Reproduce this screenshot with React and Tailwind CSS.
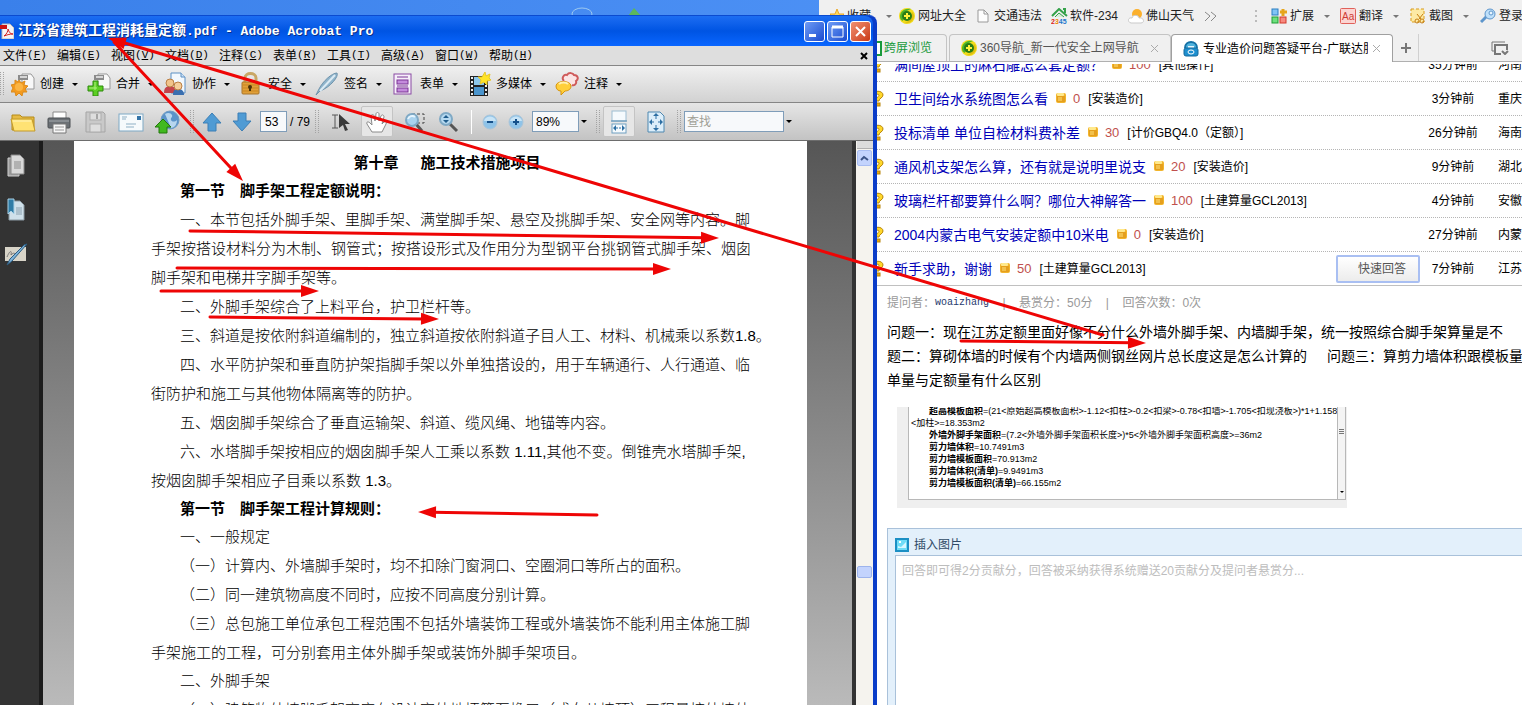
import React from 'react'

const menus = [
  ['文件', 'F'],
  ['编辑', 'E'],
  ['视图', 'V'],
  ['文档', 'D'],
  ['注释', 'C'],
  ['表单', 'R'],
  ['工具', 'T'],
  ['高级', 'A'],
  ['窗口', 'W'],
  ['帮助', 'H'],
]

const docLines = [
  { head: true, text: '第一节　脚手架工程定额说明：' },
  { indent: true, text: '一、本节包括外脚手架、里脚手架、满堂脚手架、悬空及挑脚手架、安全网等内容。脚' },
  { text: '手架按搭设材料分为木制、钢管式；按搭设形式及作用分为型钢平台挑钢管式脚手架、烟囱' },
  { text: '脚手架和电梯井字脚手架等。' },
  { indent: true, text: '二、外脚手架综合了上料平台，护卫栏杆等。' },
  { indent: true, text: '三、斜道是按依附斜道编制的，独立斜道按依附斜道子目人工、材料、机械乘以系数1.8。' },
  { indent: true, text: '四、水平防护架和垂直防护架指脚手架以外单独搭设的，用于车辆通行、人行通道、临' },
  { text: '街防护和施工与其他物体隔离等的防护。' },
  { indent: true, text: '五、烟囱脚手架综合了垂直运输架、斜道、缆风绳、地锚等内容。' },
  { indent: true, text: '六、水塔脚手架按相应的烟囱脚手架人工乘以系数 1.11,其他不变。倒锥壳水塔脚手架,' },
  { text: '按烟囱脚手架相应子目乘以系数 1.3。' },
  { head: true, text: '第一节　脚手架工程计算规则：' },
  { indent: true, sub: true, text: '一、一般规定' },
  { indent: true, text: '（一）计算内、外墙脚手架时，均不扣除门窗洞口、空圈洞口等所占的面积。' },
  { indent: true, text: '（二）同一建筑物高度不同时，应按不同高度分别计算。' },
  { indent: true, text: '（三）总包施工单位承包工程范围不包括外墙装饰工程或外墙装饰不能利用主体施工脚' },
  { text: '手架施工的工程，可分别套用主体外脚手架或装饰外脚手架项目。' },
  { indent: true, sub: true, text: '二、外脚手架' },
  { indent: true, text: '（一）建筑物外墙脚手架高度在设计室外地坪算至檐口（或女儿墙顶）工程量按外墙外' },
]

const questions = [
  { title: '满间屋顶上的麻石雕怎么套定额？', score: 100, tag: '[其他操作]', time: '35分钟前', area: '河南' },
  { title: '卫生间给水系统图怎么看', score: 0, tag: '[安装造价]', time: '3分钟前', area: '重庆' },
  { title: '投标清单 单位自检材料费补差', score: 30, tag: '[计价GBQ4.0（定额）]', time: '26分钟前', area: '海南' },
  { title: '通风机支架怎么算，还有就是说明里说支', score: 20, tag: '[安装造价]', time: '9分钟前', area: '湖北' },
  { title: '玻璃栏杆都要算什么啊？哪位大神解答一', score: 100, tag: '[土建算量GCL2013]', time: '4分钟前', area: '安徽' },
  { title: '2004内蒙古电气安装定额中10米电', score: 0, tag: '[安装造价]', time: '27分钟前', area: '内蒙' },
  { title: '新手求助，谢谢', score: 50, tag: '[土建算量GCL2013]', time: '7分钟前', area: '江苏', quick: true },
]

const arrows = [
  [1103, 335, 108, 38],
  [114, 42, 243, 181],
  [190, 231, 719, 238],
  [177, 268, 671, 269],
  [161, 291, 319, 291],
  [210, 317, 439, 319],
  [961, 341, 1146, 343],
  [597, 515, 418, 512],
]

/* ---------- small shared parts ---------- */

function Caret({ className = 'border-t-black' }) {
  return <span className={`border-x-3 border-t-3 border-x-transparent ${className}`} />
}

function Grip() {
  return (
    <svg width="4" height="24" className="shrink-0">
      {Array.from({ length: 12 }, (_, i) => (
        <g key={i} fill="#a3a3a3">
          <rect x="0" y={i * 2} width="1" height="1" />
          <rect x="3" y={i * 2} width="1" height="1" />
        </g>
      ))}
    </svg>
  )
}

function Icon({ w = 24, h = 24, children }) {
  return (
    <svg width={w} height={h} viewBox={`0 0 ${w} ${h}`} className="shrink-0">
      {children}
    </svg>
  )
}

/* ---------- acrobat icons ---------- */

function PdfIcon() {
  return (
    <Icon w={14} h={16}>
      <path d="M2 1h8l4 4v11H2z" fill="#f4f4f4" stroke="#b9b9b9" />
      <path d="M0 2h7v4H0z" fill="#c11" />
      <path d="M4 13c3-2 4-5 4-7 1 3 2 5 5 5-4 0-6 1-9 2z" fill="none" stroke="#d21f1f" />
    </Icon>
  )
}

function PrinterPaper() {
  return (
    <>
      <path d="M11 2h9l3 4v11H11z" fill="#f8f8f8" stroke="#999" />
      <path d="M7 3h10v5H7z" fill="#8b8b8b" />
      <path d="M9 4h7v2H9z" fill="#d6d6d6" />
    </>
  )
}

function CreateIcon() {
  return (
    <Icon>
      <PrinterPaper />
      <path d="M8 8l2 3 4-2-1 4 4 1-3 3 2 3-4 0-1 4-3-3-3 3-1-4-4 0 2-4-2-3 4-1 0-4 3 2z" fill="#f39a1f" stroke="#d98a1c" />
      <circle cx="8" cy="15" r="4" fill="#fbb544" />
    </Icon>
  )
}

function MergeIcon() {
  return (
    <Icon>
      <PrinterPaper />
      <path d="M6 9h5v5h5v5h-5v5H6v-5H1v-5h5z" fill="#5ccf23" stroke="#2c8a0c" />
      <path d="M8 10v8M2 16h8" stroke="#b0f080" strokeWidth="1" />
    </Icon>
  )
}

function CollabIcon() {
  return (
    <Icon>
      <path d="M8 1h10l4 4v16H8z" fill="#f3f8fd" stroke="#5d90c4" />
      <path d="M18 1v4h4" fill="#cfe2f5" stroke="#5d90c4" />
      <path d="M1 21c0-5 2-7 6-7s6 2 6 7z" fill="#c5434b" />
      <circle cx="7" cy="11" r="4" fill="#f1c48b" stroke="#ba7e43" />
      <path d="M10 23c0-5 2-6 5-6s6 1 6 6z" fill="#3a6fb0" />
      <circle cx="15" cy="14" r="4" fill="#f5ce9b" stroke="#ba7e43" />
    </Icon>
  )
}

function LockIcon() {
  return (
    <Icon>
      <path d="M6 11V6c0-6 11-6 11 0v5" fill="none" stroke="#c9a765" strokeWidth="3" />
      <rect x="3" y="10" width="17" height="12" rx="1" fill="#e0a039" stroke="#a8752a" />
      <path d="M4 13h15M4 16h15M4 19h15" stroke="#c98520" />
      <circle cx="11" cy="15" r="2" fill="#4c3209" />
      <path d="M11 15v4" stroke="#4c3209" strokeWidth="2" />
    </Icon>
  )
}

function PenIcon() {
  return (
    <Icon>
      <path d="M22 1c2 3-6 14-17 18L1 23l3-6C8 9 17 1 22 1z" fill="#8fb4cb" stroke="#6f93ab" />
      <path d="M20 3L5 19" stroke="#dcebf4" strokeWidth="2" />
    </Icon>
  )
}

function FormIcon() {
  return (
    <Icon>
      <rect x="3" y="2" width="17" height="20" fill="#f6effa" stroke="#8a4ba3" strokeWidth="1" />
      <path d="M6 5h11M6 14h11" stroke="#7a3594" />
      <rect x="6" y="8" width="11" height="4" fill="#c48bdc" stroke="#7a3594" />
      <rect x="6" y="16" width="11" height="4" fill="#c48bdc" stroke="#7a3594" />
    </Icon>
  )
}

function MediaIcon() {
  return (
    <Icon>
      <rect x="3" y="4" width="18" height="20" fill="#222" />
      <rect x="7" y="5" width="10" height="8" fill="#8cc6ea" />
      <rect x="7" y="15" width="10" height="8" fill="#4b95cd" />
      <path d="M5 5v18M19 5v18" stroke="#eee" strokeWidth="2" strokeDasharray="2 2" />
      <path d="M18 0l1 4 4-2-1 4 2 2-4 1 0 4-3-3-4 2 1-4-3-3 4 0z" fill="#ffe427" stroke="#e6c62a" />
    </Icon>
  )
}

function CommentIcon() {
  return (
    <Icon>
      <path d="M9 9c-3-3 0-7 3-6 2-3 6-2 7 0 4 0 5 4 2 6 1 3-2 5-4 4" fill="#fbe5e5" stroke="#cf5b5b" strokeWidth="2" />
      <path d="M1 14c0-6 15-6 15 0 0 4-4 5-6 5l-4 4v-4c-3 0-5-2-5-5z" fill="#ffcf3a" stroke="#d59410" />
      <path d="M4 12c2-2 7-2 9 0" fill="none" stroke="#fff0b0" strokeWidth="2" />
    </Icon>
  )
}

const tasks = [
  { label: '创建', icon: <CreateIcon /> },
  { label: '合并', icon: <MergeIcon /> },
  { label: '协作', icon: <CollabIcon /> },
  { label: '安全', icon: <LockIcon /> },
  { label: '签名', icon: <PenIcon /> },
  { label: '表单', icon: <FormIcon /> },
  { label: '多媒体', icon: <MediaIcon /> },
  { label: '注释', icon: <CommentIcon /> },
]

function FolderIcon() {
  return (
    <Icon w={26}>
      <path d="M2 20V5h8l2 2h12v13z" fill="#e6bb45" stroke="#b58a17" />
      <path d="M1 9h21l3 12H4z" fill="#ffe273" stroke="#c39a2a" />
      <path d="M3 11h18" stroke="#fff4bd" />
    </Icon>
  )
}

function PrintIcon() {
  return (
    <Icon w={26}>
      <path d="M7 2h13v8H7z" fill="#fff" stroke="#8a8a8a" />
      <rect x="2" y="8" width="22" height="10" rx="1" fill="#6b7075" stroke="#4c5054" />
      <path d="M3 11h20" stroke="#a6abb0" />
      <path d="M7 14h13v9H7z" fill="#f7f7f7" stroke="#777" />
      <path d="M9 17h9M9 20h9" stroke="#999" />
    </Icon>
  )
}

function SaveIcon() {
  return (
    <Icon w={26}>
      <path d="M4 2h17l2 2v18H4z" fill="#c9c9c9" stroke="#a5a5a5" />
      <rect x="8" y="3" width="11" height="7" fill="#dedede" stroke="#adadad" />
      <path d="M15 4v5" stroke="#a5a5a5" strokeWidth="2" />
      <rect x="8" y="14" width="11" height="8" fill="#dedede" stroke="#adadad" />
    </Icon>
  )
}

function MailIcon() {
  return (
    <Icon w={26}>
      <rect x="1" y="4" width="24" height="17" fill="#f6fafc" stroke="#7fa9c5" />
      <rect x="19" y="6" width="4" height="4" fill="#3374a8" />
      <path d="M4 7h5M4 9h4M8 14h10M8 17h8" stroke="#8fb0c5" />
    </Icon>
  )
}

function UploadIcon() {
  return (
    <Icon w={26}>
      <circle cx="16" cy="10" r="9" fill="#5b93c9" stroke="#6f9cc4" />
      <path d="M11 4c3-2 6-1 7 1s-2 3-1 5 4 2 6 0c0 5-3 8-6 8" fill="#b7d6ee" />
      <path d="M9 9l8 8h-4v6H5v-6H1z" fill="#41b91f" stroke="#23780c" />
    </Icon>
  )
}

function BlueArrow({ down }) {
  return (
    <Icon w={20}>
      <path
        d={down ? 'M6 3h8v8h5l-9 10L1 11h5z' : 'M10 3l9 10h-5v8H6v-8H1z'}
        fill="#4f9bd4"
        stroke="#3d7fb5"
      />
    </Icon>
  )
}

function SelectTool() {
  return (
    <Icon w={20}>
      <path d="M1 5h6M4 5v13M1 18h6" stroke="#555" strokeWidth="1" />
      <path d="M8 4l11 10h-5l3 6-3 1-2-6-4 3z" fill="#3b3b3b" />
    </Icon>
  )
}

function HandIcon() {
  return (
    <Icon>
      <path
        d="M7 22l-5-8c-1-2 1-3 3-1l2 2-1-9c0-2 3-2 3 0l1 5 1-7c0-2 3-2 3 0v7l2-5c1-2 3-1 3 1l-2 7 2-2c2-1 3 0 2 2l-4 8z"
        fill="#fff"
        stroke="#8a8a8a"
      />
    </Icon>
  )
}

function MarqueeZoom() {
  return (
    <Icon>
      <path d="M9 4h12v9H11" fill="none" stroke="#444" strokeDasharray="3 2" />
      <path d="M13 14l6 7" stroke="#555" strokeWidth="3" />
      <circle cx="9" cy="10" r="6" fill="#a9d2ee" stroke="#7fa9c5" strokeWidth="2" />
      <path d="M5 9c1-3 5-4 7-2" stroke="#e6f4fd" strokeWidth="2" fill="none" />
    </Icon>
  )
}

function DynamicZoom() {
  return (
    <Icon>
      <path d="M13 14l7 7" stroke="#555" strokeWidth="3" />
      <circle cx="9" cy="9" r="6" fill="#b6d9f0" stroke="#7fa9c5" strokeWidth="2" />
      <path d="M6 8l3-3 3 3zM6 10l3 3 3-3z" fill="#1f5c8c" />
    </Icon>
  )
}

function ZoomDot({ plus }) {
  return (
    <Icon w={16} h={16}>
      <circle cx="8" cy="8" r="7" fill="#8fc3e8" stroke="#a9c4d8" />
      <path d="M2 7c1-6 11-6 12 0z" fill="#c8e4f6" />
      <path d={plus ? 'M5 8h6M8 5v6' : 'M5 8h6'} stroke="#15508a" strokeWidth="2" />
    </Icon>
  )
}

function FitWidthIcon() {
  return (
    <Icon w={18}>
      <rect x="2" y="1" width="14" height="10" fill="#f5fafd" stroke="#9dbdd2" />
      <path d="M1 11h16" stroke="#4f88b0" />
      <rect x="2" y="14" width="14" height="9" fill="#f5fafd" stroke="#6f9fc0" />
      <path d="M6 15l-3 3 3 3zM12 15l3 3-3 3z" fill="#2d6fa3" />
      <path d="M6 18h6" stroke="#2d6fa3" strokeDasharray="2 1" />
    </Icon>
  )
}

function FitPageIcon() {
  return (
    <Icon w={18}>
      <path d="M1 2h12l4 4v16H1z" fill="#dceefa" stroke="#4f88b0" />
      <path d="M9 3l3 3H6zM9 21l3-3H6zM2 12l3-3v6zM16 12l-3-3v6z" fill="#2d6fa3" />
      <path d="M9 6v3M9 15v3M5 12h2M11 12h2" stroke="#2d6fa3" />
    </Icon>
  )
}

function PagesIcon() {
  return (
    <Icon w={20}>
      <path d="M2 4h11v18H2z" fill="#9c9c9c" stroke="#d0d0d0" />
      <path d="M5 1h9l4 4v15H5z" fill="#d9d9d9" stroke="#8a8a8a" />
      <path d="M8 8h7M8 10h7M8 12h7M8 14h7" stroke="#8b8b8b" />
    </Icon>
  )
}

function BookmarkIcon() {
  return (
    <Icon w={20}>
      <path d="M3 3h11l4 4v15H3z" fill="#cfe0ea" stroke="#8b9aa3" />
      <path d="M10 10h6M10 12h6M10 14h6M10 16h6" stroke="#8aa0ae" />
      <path d="M2 1h6v15l-3-3-3 3z" fill="#2f7ca6" stroke="#a9d1e6" />
    </Icon>
  )
}

function SignIcon() {
  return (
    <Icon>
      <rect x="1" y="5" width="21" height="14" fill="#d8d4c8" />
      <path d="M3 15c3-7 5-7 4-2 3-3 4-2 5 1" fill="none" stroke="#777" />
      <path d="M23 2L8 19l-5 4 3-6L20 3z" fill="#7fb4da" stroke="#2c5d83" />
    </Icon>
  )
}

/* ---------- acrobat window ---------- */

function TitleBar() {
  const btn = 'w-[21px] h-[21px] rounded-[3px] border border-white flex items-center justify-center'
  return (
    <header className="h-[30px] shrink-0 pl-1 pr-[2px] flex items-center justify-between rounded-tr-lg bg-linear-to-b from-[#1c6df2] via-[#0054e3] to-[#0a66ff]">
      <h1 className="flex items-center gap-1 min-w-0 text-sm font-bold text-white whitespace-nowrap [text-shadow:1px_1px_#0a2f86]">
        <span className="-ml-1 flex"><PdfIcon /></span>
        <span className="font-['Liberation_Mono','Noto_Sans_CJK_SC',monospace]">
          江苏省建筑工程消耗量定额<span className="text-[13px]">.pdf - Adobe Acrobat Pro</span>
        </span>
      </h1>
      <div className="flex gap-[2px]">
        <button aria-label="最小化" className={`${btn} bg-linear-to-br from-[#6f9bf5] to-[#1c49cf]`}>
          <Icon w={13} h={13}><rect x="1" y="9" width="7" height="3" fill="#fff" /></Icon>
        </button>
        <button aria-label="最大化" className={`${btn} bg-linear-to-br from-[#6f9bf5] to-[#1c49cf]`}>
          <Icon w={13} h={13}><path d="M1 2h11v10H1z" fill="none" stroke="#fff" /><path d="M1 2h11" stroke="#fff" strokeWidth="3" /></Icon>
        </button>
        <button aria-label="关闭" className={`${btn} bg-linear-to-br from-[#f0906f] to-[#c9360f]`}>
          <Icon w={13} h={13}><path d="M2 2l9 9M11 2l-9 9" stroke="#fff" strokeWidth="2" /></Icon>
        </button>
      </div>
    </header>
  )
}

function MenuBar() {
  return (
    <nav className="h-5 shrink-0 pl-[3px] pr-1 flex items-center bg-[#dedede] border-b border-[#868686]">
      {menus.map(([name, key]) => (
        <button key={key} className="w-[54px] flex items-center whitespace-nowrap">
          {name}
          <span className="font-['Liberation_Mono',monospace] text-[11px]">(<u>{key}</u>)</span>
        </button>
      ))}
      <button aria-label="关闭文档" className="ml-auto">
        <Icon w={10} h={8}><path d="M2 1l6 6M8 1L2 7" stroke="#000" strokeWidth="2" /></Icon>
      </button>
    </nav>
  )
}

function TaskBar() {
  return (
    <div className="h-[37px] shrink-0 pl-1 flex items-center bg-linear-to-b from-[#f0f0f0] to-[#d2d2d2] border-b border-[#868686]">
      <div className="w-2 -ml-1"><Grip /></div>
      <div className="flex pl-[3px]">
        {tasks.map((t) => (
          <button key={t.label} className="flex items-center pr-[9px] whitespace-nowrap">
            {t.icon}
            <span className="pl-[5px] pr-2">{t.label}</span>
            <Caret />
          </button>
        ))}
      </div>
    </div>
  )
}

function ToolBar() {
  const field = 'h-[21px] border border-[#7f9db9] bg-[#f7f9fb] text-xs'
  const active = 'w-8 h-[31px] flex items-center justify-center bg-[#e6e6e6] border border-[#c4c4c4] rounded-xs'
  return (
    <div className="h-[38px] shrink-0 flex items-center bg-linear-to-b from-[#e6e6e6] to-[#c3c3c3] border-b border-[#6d6d6d] whitespace-nowrap">
      <div className="flex gap-[10px] pl-[10px] pr-[10px]">
        <button aria-label="打开"><FolderIcon /></button>
        <button aria-label="打印"><PrintIcon /></button>
        <button aria-label="保存"><SaveIcon /></button>
        <button aria-label="电子邮件"><MailIcon /></button>
        <button aria-label="上载"><UploadIcon /></button>
      </div>
      <Grip />
      <div className="flex items-center gap-[10px] pl-2">
        <button aria-label="上一页"><BlueArrow /></button>
        <button aria-label="下一页"><BlueArrow down /></button>
      </div>
      <input aria-label="页码" defaultValue="53" className={`${field} ml-2 w-[27px] pl-1`} />
      <span className="w-7 pl-[3px]">/ 79</span>
      <Grip />
      <div className="flex items-center gap-[10px] pl-3">
        <button aria-label="选择工具"><SelectTool /></button>
        <button aria-label="手形工具" className={active}><HandIcon /></button>
        <button aria-label="选框缩放"><MarqueeZoom /></button>
        <button aria-label="动态缩放"><DynamicZoom /></button>
        <span className="w-px h-6 bg-[#b0b0b0] border-r border-white" />
        <button aria-label="缩小"><ZoomDot /></button>
        <button aria-label="放大"><ZoomDot plus /></button>
      </div>
      <input aria-label="缩放比例" defaultValue="89%" className={`${field} ml-2 w-[47px] pl-[3px]`} />
      <button aria-label="缩放选项" className="w-[17px] pl-[2px] flex"><Caret /></button>
      <Grip />
      <div className="flex items-center gap-3 pl-[3px] pr-3">
        <button aria-label="适合宽度" className={active}><FitWidthIcon /></button>
        <button aria-label="适合页面"><FitPageIcon /></button>
      </div>
      <Grip />
      <input aria-label="查找" placeholder="查找" className={`${field} ml-[3px] w-[100px] pl-[2px] placeholder:text-[#a0a096]`} />
      <button aria-label="查找选项" className="w-3 pl-[2px] flex"><Caret /></button>
    </div>
  )
}

function DocPage() {
  return (
    <article className="flex-1 min-w-0 bg-white pl-[77px] pr-16 pt-[7px] text-[15px] text-black whitespace-nowrap">
      <h2 className="flex justify-center gap-[22px] leading-[29px] font-bold">
        <span>第十章</span>
        <span>施工技术措施项目</span>
      </h2>
      {docLines.map((l, i) => {
        if (l.head) return <h3 key={i} className="pl-[29px] leading-7 font-bold">{l.text}</h3>
        if (l.sub) return <h4 key={i} className="pl-[29px] leading-7 font-light">{l.text}</h4>
        return <p key={i} className={`leading-[29px] font-light ${l.indent ? 'pl-[29px]' : ''}`}>{l.text}</p>
      })}
    </article>
  )
}

function Acrobat() {
  return (
    <section className="z-10 mt-[15px] min-w-0 flex flex-col overflow-hidden rounded-tr-lg bg-[#0b3fc6] border-t border-r-4 border-t-[#0b4bd0] border-r-[#0a3cc8]">
      <TitleBar />
      <MenuBar />
      <TaskBar />
      <ToolBar />
      <div className="flex-1 min-h-0 flex overflow-hidden">
        <aside className="w-[43px] shrink-0 pl-1 pt-[13px] flex flex-col gap-5 bg-[#333333] border-r-4 border-[#1c1c1c]">
          <button aria-label="页面" className="w-6 pl-[2px]"><PagesIcon /></button>
          <button aria-label="书签" className="w-6 pl-[2px]"><BookmarkIcon /></button>
          <button aria-label="签名"><SignIcon /></button>
        </aside>
        <div className="flex-1 min-w-0 flex pl-[31px] pr-[45px] bg-linear-to-b from-[#565656] to-[#bababa]">
          <DocPage />
        </div>
        <div className="w-[21px] shrink-0 pl-[1px] border-l-4 border-[#333333] bg-[#f5f3ee]">
          <div className="h-2 bg-[#dcdcdc] border-b border-[#b0b0b0]" />
          <button aria-label="向上滚动" className="w-[15px] h-4 mt-[1px] flex items-center justify-center rounded-xs bg-[#c3d3fd] border border-[#a9bdf2]">
            <Icon w={9} h={7}><path d="M1 5l3-3 4 3" fill="none" stroke="#3b5387" strokeWidth="2" /></Icon>
          </button>
          <div className="mt-[400px] w-[15px] h-3 rounded-xs bg-[#c3d3fd] border border-[#9db3ec]" />
        </div>
      </div>
    </section>
  )
}

/* ---------- browser window ---------- */

function NavIcon() {
  return (
    <Icon w={16} h={16}>
      <circle cx="8" cy="8" r="8" fill="#f2dc1a" />
      <path d="M1 9c0-6 5-9 11-8C7 3 5 5 4 13 2 12 1 11 1 9z" fill="#4fb52a" />
      <path d="M15 8c0 5-5 8-10 7 5-1 7-4 8-11 1 1 2 2 2 4z" fill="#e0c010" />
      <circle cx="8" cy="8" r="5" fill="#2a7d14" />
      <path d="M5 8h6M8 5v6" stroke="#fff23a" strokeWidth="2" />
    </Icon>
  )
}

function StarIcon() {
  return (
    <Icon w={16} h={16}>
      <path d="M8 1l2 5h5l-4 4 2 5-5-3-5 3 2-5-4-4h5z" fill="#ffd95e" stroke="#eaa827" />
    </Icon>
  )
}

function PaperIcon() {
  return (
    <Icon w={12} h={14}>
      <path d="M1 1h6l4 4v8H1z" fill="#fdfdfd" stroke="#999" />
      <path d="M7 1v4h4" fill="none" stroke="#999" />
    </Icon>
  )
}

function HouseIcon() {
  return (
    <Icon w={17} h={16}>
      <path d="M1 8l7-7 8 7" fill="none" stroke="#35a24a" strokeWidth="2" />
      <path d="M4 9l4-4 5 4" fill="#d7efd9" stroke="#35a24a" />
      <path d="M12 1h2v4" fill="none" stroke="#35a24a" strokeWidth="2" />
      <text x="0" y="16" fontSize="7" fontWeight="bold" fontFamily="Liberation Sans">
        <tspan fill="#d22">2</tspan><tspan fill="#e80">3</tspan><tspan fill="#27c">45</tspan>
      </text>
    </Icon>
  )
}

function WeatherIcon() {
  return (
    <Icon w={16} h={16}>
      <circle cx="9" cy="6" r="5" fill="#fbb02d" />
      <path d="M3 15c-4-1-3-6 1-5 1-4 7-3 7 0 5-1 6 5 2 5z" fill="#fff" stroke="#c9c9c9" />
    </Icon>
  )
}

function GridIcon() {
  return (
    <Icon w={16} h={16}>
      <rect x="1" y="1" width="6" height="6" fill="#7fc4f5" stroke="#2b7fc2" />
      <path d="M12 1v7M9 4h7" stroke="#e6a51c" strokeWidth="3" />
      <rect x="1" y="9" width="6" height="6" fill="#6ee07e" stroke="#1f9d34" />
      <rect x="9" y="9" width="6" height="6" fill="#f78a80" stroke="#d2382b" />
    </Icon>
  )
}

function TranslateIcon() {
  return (
    <Icon w={16} h={16}>
      <rect x="0.5" y="0.5" width="15" height="15" rx="1" fill="#fbd5d2" stroke="#e0615a" />
      <text x="2" y="12" fontSize="10" fontFamily="Liberation Sans" fill="#cf3a34">Aa</text>
    </Icon>
  )
}

function SnipIcon() {
  return (
    <Icon w={16} h={16}>
      <rect x="1" y="1" width="13" height="13" fill="#fdeaa5" stroke="#d99b1b" strokeDasharray="3 2" />
      <path d="M7 6l4 5M13 6l-4 5" stroke="#c57d10" />
      <circle cx="7" cy="13" r="2" fill="none" stroke="#c57d10" />
      <circle cx="12" cy="13" r="2" fill="none" stroke="#c57d10" />
    </Icon>
  )
}

function KeyIcon() {
  return (
    <Icon w={16} h={16}>
      <path d="M7 8l-6 6" stroke="#5e96cc" strokeWidth="3" />
      <circle cx="10" cy="6" r="5" fill="#bfe0fa" stroke="#5e96cc" />
      <circle cx="11" cy="5" r="2" fill="#e8f5ff" stroke="#5e96cc" />
    </Icon>
  )
}

function SiteIcon() {
  return (
    <Icon w={16} h={16}>
      <path d="M2 7c0-8 12-8 12 0" fill="#4fb2dd" stroke="#1571a6" strokeWidth="2" />
      <rect x="5" y="5" width="6" height="2" fill="#e8f6fd" />
      <rect x="1" y="7" width="14" height="8" rx="2" fill="#1e8fcf" stroke="#12689b" />
      <ellipse cx="8" cy="11" rx="3" ry="2" fill="none" stroke="#fff" />
    </Icon>
  )
}

function AskIcon() {
  return (
    <Icon w={12} h={17}>
      <path d="M1 5c0-5 10-5 10 0 0 3-4 3-4 6H4c0-4 3-4 3-6 0-1-3-1-3 0z" fill="#ffd82b" stroke="#b78408" />
      <rect x="3" y="13" width="5" height="3" fill="#e9a90f" stroke="#b78408" />
    </Icon>
  )
}

function CoinIcon() {
  return (
    <Icon w={11} h={10}>
      <rect x="0" y="0" width="10" height="10" rx="2" fill="#f2b52c" />
      <rect x="1" y="0" width="7" height="3" rx="1" fill="#ffe98c" />
      <path d="M1 4h8M1 6h8M1 8h8" stroke="#d88a10" />
      <path d="M2 5h4M2 7h4" stroke="#ffe27a" />
    </Icon>
  )
}

function CloseX() {
  return (
    <Icon w={9} h={9}>
      <path d="M1 1l7 7M8 1L1 8" stroke="#aaa" />
    </Icon>
  )
}

function Favourites() {
  const grey = 'border-t-[#777]'
  return (
    <nav className="h-8 flex items-center justify-between pl-[10px] overflow-hidden text-[#222]">
      <div className="flex items-center">
        <a href="#" className="flex items-center gap-[2px] w-[57px]"><StarIcon />收藏</a>
        <span className="w-[11px] flex"><Caret className={grey} /></span>
        <a href="#" className="flex items-center gap-[3px] pl-[2px] w-[80px]"><NavIcon />网址大全</a>
        <a href="#" className="flex items-center gap-[5px] w-[74px]"><PaperIcon />交通违法</a>
        <a href="#" className="flex items-center gap-[2px] w-[77px]"><HouseIcon />软件-234</a>
        <a href="#" className="flex items-center gap-[2px] w-[76px]"><WeatherIcon />佛山天气</a>
        <button aria-label="更多收藏">
          <Icon w={13} h={11}><path d="M1 1l5 4-5 5M7 1l5 4-5 5" fill="none" stroke="#888" /></Icon>
        </button>
      </div>
      <div className="flex items-center">
        <Icon w={16} h={14}><path d="M1 1v2M1 6v2M1 11v2" stroke="#bbb" strokeWidth="2" /></Icon>
        <button className="flex items-center gap-[3px] w-[69px]"><GridIcon />扩展<span className="ml-[7px] flex"><Caret className={grey} /></span></button>
        <button className="flex items-center gap-[3px] w-[70px]"><TranslateIcon />翻译<span className="ml-[7px] flex"><Caret className={grey} /></span></button>
        <button className="flex items-center gap-[3px] w-[70px]"><SnipIcon />截图<span className="ml-[7px] flex"><Caret className={grey} /></span></button>
        <button className="flex items-center gap-[3px] w-[42px] whitespace-nowrap"><KeyIcon />登录</button>
      </div>
    </nav>
  )
}

function Tabs() {
  return (
    <div className="h-[30px] flex items-end border-b border-[#b0b0b0] whitespace-nowrap">
      <a href="#" className="w-[128px] h-[27px] pl-[52px] flex items-center gap-[2px] border-t border-r border-[#c4c4c4] rounded-tr-sm text-[#1a9a3c]">
        <Icon w={11} h={15}><rect x="1" y="1" width="9" height="13" fill="#fff" stroke="#1a9a3c" strokeWidth="2" /></Icon>
        跨屏浏览
      </a>
      <a href="#" className="w-[222px] h-[27px] ml-[2px] px-[11px] flex items-center gap-[3px] border border-b-0 border-[#c4c4c4] rounded-t-sm text-[#555]">
        <NavIcon />
        360导航_新一代安全上网导航
        <span className="ml-auto"><CloseX /></span>
      </a>
      <a href="#" className="w-[222px] h-[28px] -mb-px px-[11px] flex items-center gap-1 border border-b-0 border-[#a0a0a0] rounded-t-sm bg-white text-black">
        <SiteIcon />
        <span className="flex-1 min-w-0 overflow-hidden">专业造价问题答疑平台-广联达服</span>
        <CloseX />
      </a>
      <button aria-label="新标签页" className="w-[26px] h-[27px] flex items-center justify-center border-r border-[#d0d0d0]">
        <Icon w={12} h={12}><path d="M6 1v10M1 6h10" stroke="#777" strokeWidth="2" /></Icon>
      </button>
      <button aria-label="窗口列表" className="ml-auto mr-[13px] h-[27px] flex items-center">
        <Icon w={18} h={14}>
          <path d="M3 10H1V1h13" fill="none" stroke="#777" />
          <path d="M10 13H4V4h12v5" fill="none" stroke="#777" strokeWidth="2" />
          <path d="M11 10l3 3 3-3" fill="none" stroke="#777" strokeWidth="2" />
        </Icon>
      </button>
    </div>
  )
}

function QuestionRow({ q, last }) {
  return (
    <li className={`h-[34px] pl-[53px] flex items-center whitespace-nowrap border-b ${last ? 'border-[#c0c0c0]' : 'border-dotted border-[#b5b5b5]'}`}>
      <AskIcon />
      <a href="#" className="ml-[10px] text-sm text-[#0000b8]">{q.title}</a>
      <span className="ml-2 flex items-center gap-[6px] text-[13px] text-[#c0504d]"><CoinIcon />{q.score}</span>
      <span className="ml-2">{q.tag}</span>
      <span className="ml-auto flex items-center">
        {q.quick && (
          <button className="w-[84px] h-7 pl-2 border-2 border-[#a9bff2] rounded-xs bg-linear-to-b from-white to-[#ececec] text-[#555]">快速回答</button>
        )}
        <span className="w-[66px] text-center">{q.time}</span>
        <span className="w-[36px] pl-3">{q.area}</span>
      </span>
    </li>
  )
}

function ResultShot() {
  return (
    <div className="ml-[78px] mt-[15px] w-[450px] h-[101px] pl-[11px] pr-[1px] pb-2 bg-[#efefef] overflow-hidden">
      <div className="h-full flex border border-t-0 border-[#b8b8b8] bg-white">
        <div className="flex-1 min-w-0 pl-[20px] -mt-[2px] text-[9px] leading-3 whitespace-nowrap text-black">
          <p><b>超高模板面积</b>=(21&lt;原始超高模板面积&gt;-1.12&lt;扣柱&gt;-0.2&lt;扣梁&gt;-0.78&lt;扣墙&gt;-1.705&lt;扣现浇板&gt;)*1+1.158</p>
          <p className="-ml-[18px]">&lt;加柱&gt;=18.353m2</p>
          <p><b>外墙外脚手架面积</b>=(7.2&lt;外墙外脚手架面积长度&gt;)*5&lt;外墙外脚手架面积高度&gt;=36m2</p>
          <p><b>剪力墙体积</b>=10.7491m3</p>
          <p><b>剪力墙模板面积</b>=70.913m2</p>
          <p><b>剪力墙体积(清单)</b>=9.9491m3</p>
          <p><b>剪力墙模板面积(清单)</b>=66.155m2</p>
        </div>
        <div className="w-2 flex flex-col items-center justify-between pb-[6px] border-l border-[#b8b8b8] bg-[#f4f4f4]">
          <svg width="5" height="32"><path d="M0 22h5v1H0zM0 24h5v1H0zM0 26h5v1H0z" fill="#777" /></svg>
          <span className="border-x-2 border-t-2 border-x-transparent border-t-black" />
        </div>
      </div>
    </div>
  )
}

function Browser() {
  return (
    <section className="-ml-[58px] min-w-0 flex flex-col overflow-hidden bg-[#f0f0f0]">
      <Favourites />
      <Tabs />
      <main className="flex-1 min-h-0 flex flex-col bg-white overflow-hidden pt-[2px]">
        <div className="overflow-hidden shrink-0">
          <ul className="-mt-4">
            {questions.map((q, i) => (
              <QuestionRow key={q.title} q={q} last={i === questions.length - 1} />
            ))}
          </ul>
        </div>
        <p className="shrink-0 h-[34px] pl-[68px] flex items-center text-[#999] whitespace-nowrap">
          提问者：
          <a href="#" className="font-['Liberation_Mono',monospace] text-[10px] text-[#1f3a6e]">woaizhang</a>
          <span className="w-[30px] text-center">|</span>
          悬赏分：50分
          <span className="w-[30px] text-center">|</span>
          回答次数：0次
        </p>
        <div className="shrink-0 pl-[68px] text-sm leading-6 text-black whitespace-nowrap">
          <p>问题一：现在江苏定额里面好像不分什么外墙外脚手架、内墙脚手架，统一按照综合脚手架算量是不</p>
          <p>题二：算砌体墙的时候有个内墙两侧钢丝网片总长度这是怎么计算的<span className="pl-5">问题三：算剪力墙体积跟模板量</span></p>
          <p>单量与定额量有什么区别</p>
        </div>
        <ResultShot />
        <div className="flex-1 min-h-0 mt-5 ml-[68px] pl-[7px] flex flex-col border-l border-t border-[#a9c1da] bg-[#e3f0fb]">
          <button className="h-[26px] shrink-0 pt-[6px] flex items-center gap-[5px] text-[#2f4a66]">
            <Icon w={14} h={14}>
              <rect x="1" y="1" width="12" height="12" fill="#6fdcf7" stroke="#1b8fc4" strokeWidth="2" />
              <path d="M3 8l3 1 5-5v6H3z" fill="#d8f7ff" />
              <rect x="4" y="3" width="2" height="2" fill="#fff" />
            </Icon>
            插入图片
          </button>
          <textarea
            aria-label="回答"
            placeholder="回答即可得2分贡献分，回答被采纳获得系统赠送20贡献分及提问者悬赏分..."
            className="flex-1 min-h-0 w-full resize-none border-l border-t border-[#a9c1da] bg-white px-[6px] pt-[6px] leading-[18px] placeholder:text-[#bdbdbd]"
          />
        </div>
      </main>
    </section>
  )
}

/* red pen marks drawn over both windows */
function Annotations() {
  return (
    <svg className="absolute inset-0 z-20 w-full h-full pointer-events-none">
      {arrows.map(([x1, y1, x2, y2]) => {
        const len = Math.hypot(x2 - x1, y2 - y1)
        const deg = (Math.atan2(y2 - y1, x2 - x1) * 180) / Math.PI
        return (
          <g key={`${x1}-${y1}`} transform={`translate(${x1} ${y1}) rotate(${deg})`}>
            <path d={`M0 0H${len - 14}`} stroke="#ee0505" strokeWidth="3" strokeLinecap="round" />
            <path d={`M${len} 0l-18 -6v12z`} fill="#ee0505" />
          </g>
        )
      })}
    </svg>
  )
}

export default function App() {
  return (
    <div className="relative h-screen overflow-hidden bg-linear-to-r from-[#3a80ea] to-[#5a9dfd] font-['Liberation_Sans','Noto_Sans_CJK_SC',sans-serif] text-xs text-black">
      <svg className="absolute left-[568px] top-1 w-20 h-3">
        <ellipse cx="14" cy="10" rx="10" ry="6" fill="none" stroke="#9cc9f0" />
        <path d="M60 12l6-8 7 8z" fill="#5cb85c" />
      </svg>
      <div className="h-full grid grid-cols-[877fr_645fr] grid-rows-[minmax(0,1fr)]">
        <Acrobat />
        <Browser />
      </div>
      <Annotations />
    </div>
  )
}
